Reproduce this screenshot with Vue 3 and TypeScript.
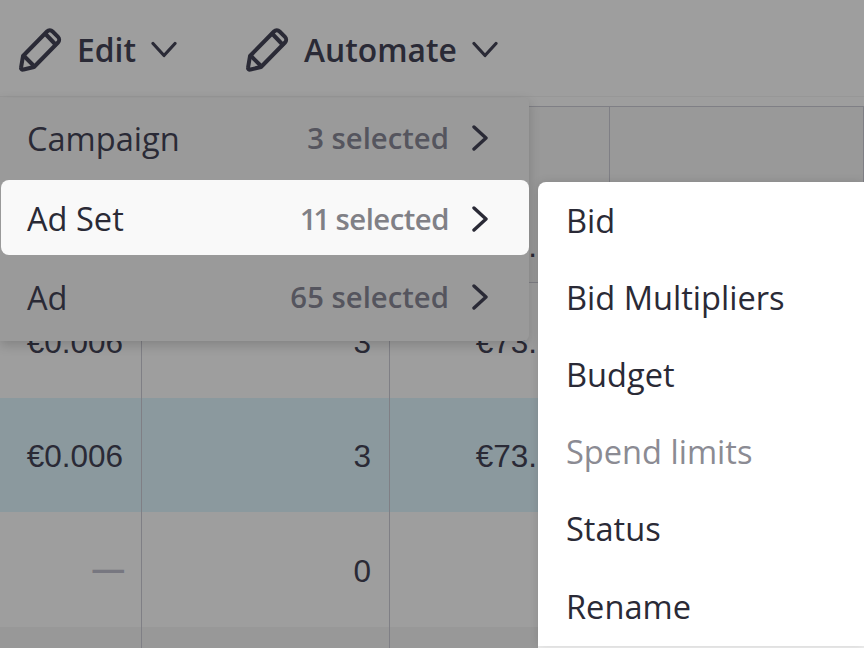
<script setup lang="ts">
interface MenuItem {
  label: string
  count: string
  active?: boolean
}

interface Row {
  cost: string
  results: string
  spend: string
  kind: string
}

const toolbar = ['Edit', 'Automate']

const menuItems: MenuItem[] = [
  { label: 'Campaign', count: '3 selected' },
  { label: 'Ad Set', count: '11 selected', active: true },
  { label: 'Ad', count: '65 selected' },
]

const subItems = [
  { label: 'Bid' },
  { label: 'Bid Multipliers' },
  { label: 'Budget' },
  { label: 'Spend limits', disabled: true },
  { label: 'Status' },
  { label: 'Rename' },
]

// the spend column runs on under the submenu, only its start is visible
const rows: Row[] = [
  { cost: '', results: '', spend: '€73.', kind: 'top' },
  { cost: '€0.006', results: '3', spend: '€73.', kind: 'plain' },
  { cost: '€0.006', results: '3', spend: '€73.', kind: 'selected' },
  { cost: '—', results: '0', spend: '', kind: 'plain' },
  { cost: '', results: '', spend: '', kind: 'last' },
]
</script>

<template>
  <div class="page">
    <header class="toolbar">
      <button v-for="name in toolbar" :key="name" class="tool">
        <svg class="pencil" viewBox="0 0 46 46" fill="none" stroke="currentColor" stroke-width="4" stroke-linejoin="round" stroke-linecap="round">
          <path d="M5 30 29 5.500a4 4 0 0 1 5.600 0l5.400 5.400a4 4 0 0 1 0 5.600L16 41 5.500 43.500a1.800 1.800 0 0 1-2.400-2.200Z" />
          <path d="M27.500 8 37.500 18.500M6 30l10 10" />
        </svg>
        <span>{{ name }}</span>
        <svg class="caret" viewBox="0 0 26 17" fill="none" stroke="currentColor" stroke-width="3.200" stroke-linecap="round" stroke-linejoin="round">
          <path d="M2 2.500 13 14.500 24 2.500" />
        </svg>
      </button>
    </header>

    <section class="table">
      <div v-for="(row, i) in rows" :key="i" class="row" :class="row.kind">
        <div class="cell" :class="{ dash: row.cost === '—' }">{{ row.cost }}</div>
        <div class="cell">{{ row.results }}</div>
        <div class="cell spend">{{ row.spend }}</div>
        <div class="cell"></div>
      </div>
    </section>

    <ul class="menu">
      <li v-for="item in menuItems" :key="item.label" class="menu-item" :class="{ active: item.active }">
        <span class="menu-label">{{ item.label }}</span>
        <span class="menu-count">{{ item.count }}</span>
        <svg class="chevron" viewBox="0 0 18 26" fill="none" stroke="currentColor" stroke-width="3.400" stroke-linecap="round" stroke-linejoin="round">
          <path d="M3 2 15 13 3 24" />
        </svg>
      </li>
    </ul>

    <ul class="submenu">
      <li v-for="item in subItems" :key="item.label" :class="{ disabled: item.disabled }">{{ item.label }}</li>
    </ul>
  </div>
</template>

<style scoped>
.page {
  position: relative;
  width: 864px;
  height: 648px;
  overflow: hidden;
  background: #9e9e9e;
  color: #2a2a36;
  font-family: "Open Sans", Lato, sans-serif;
}

.toolbar {
  display: flex;
  gap: 68px;
  height: 97px;
  padding: 2px 0 0 18px;
  box-sizing: border-box;
  border-bottom: 1px solid #979797;
}

.tool {
  display: flex;
  align-items: center;
  padding: 0;
  border: 0;
  background: none;
  color: inherit;
  font: inherit;
  font-size: 31.800px;
  font-weight: 600;
}

.pencil {
  width: 46px;
  height: 46px;
  margin-right: 13px;
}

.caret {
  width: 26px;
  height: 17px;
  margin-left: 15px;
}

.table {
  margin-top: 9px;
  border-top: 1px solid #7f7f85;
  font-family: "Liberation Sans", Arial, sans-serif;
  font-size: 31.500px;
}

.row {
  display: grid;
  grid-template-columns: 142px 248px 220px 1fr;
  height: 114.500px;
}

.row.top {
  height: 175px;
  background: #999;
  border-bottom: 1px solid #7f7f85;
}

.row.selected {
  background: #8b999e;
}

.row.last {
  background: #989898;
}

.cell {
  display: flex;
  align-items: center;
  justify-content: flex-end;
  padding: 4px 18px 0 0;
  border-right: 1px solid #7f7f85;
  box-sizing: border-box;
}

.row.top .cell {
  align-items: flex-end;
  padding-bottom: 17px;
}

.cell.spend {
  padding-right: 72px;
}

.cell.dash {
  padding: 0 17px 0 0;
  color: #777780;
  font-weight: 700;
}

.menu {
  position: absolute;
  left: 0;
  top: 98px;
  width: 529px;
  height: 243px;
  margin: 0;
  padding: 0;
  box-sizing: border-box;
  list-style: none;
  background: #9a9a9a;
  border-radius: 0 4px 6px 0;
  box-shadow: 0 4px 12px rgba(0, 0, 0, 0.18);
  font-size: 32.600px;
}

.menu-item {
  display: flex;
  align-items: center;
  height: 80px;
  padding: 0 40px 0 26px;
  margin-left: 1px;
  border-radius: 8px;
}

.menu-item.active {
  box-sizing: border-box;
  height: 75px;
  margin: 2px 0 2px 1px;
  padding-top: 2px;
  background: #f9f9f9;
}

.menu-label {
  flex: 1;
}

.menu-count {
  margin-right: 22px;
  color: #55555e;
  font-size: 29.300px;
  font-weight: 600;
  font-variant-numeric: proportional-nums;
}

.active .menu-count {
  color: #808086;
  letter-spacing: -0.500px;
}

.chevron {
  width: 18px;
  height: 26px;
}

.submenu {
  position: absolute;
  left: 538px;
  top: 182px;
  right: 0;
  bottom: 2px;
  margin: 0;
  padding: 0 0 0 28px;
  list-style: none;
  background: #fff;
  border-radius: 8px 0 0 0;
  box-shadow: 0 0 10px rgba(0, 0, 0, 0.12), 0 2px 0 #efefef;
  font-size: 32.600px;
}

.submenu li {
  display: flex;
  align-items: center;
  height: 77.200px;
}

.submenu li:first-child {
  margin-top: -0.500px;
}

.submenu li.disabled {
  color: #8b8b93;
}
</style>
